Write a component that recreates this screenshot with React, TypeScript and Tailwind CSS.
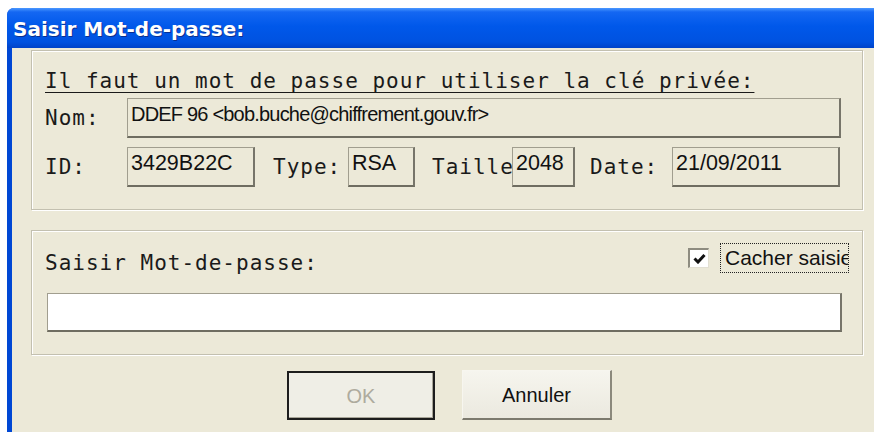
import React from "react";

const mono = "font-['DejaVu_Sans_Mono',monospace] text-[21px] leading-[24px] tracking-[1px] text-[#1a1a1a]";
const sans = "font-['Liberation_Sans',Arial,sans-serif] text-[#111]";

// Read-only field with the grey sunken edge
const Field = ({ w, text, cls = "text-[21.5px]" }: { w: string; text: string; cls?: string }) => (
	<div
		className={`${w} h-[40px] shrink-0 border-t border-l border-[#a19e8f] border-r-2 border-b-2 border-r-[#77756a] border-b-[#6f6d61] pl-[3px] pt-[4px] leading-[22px] whitespace-nowrap overflow-hidden ${sans} ${cls}`}
	>
		{text}
	</div>
);

const Label = ({ w, text }: { w: string; text: string }) => (
	<span className={`${w} shrink-0 whitespace-nowrap overflow-hidden ${mono}`}>{text}</span>
);

const App = () => {
	return (
		<div className="w-[874px] h-[432px] overflow-hidden bg-white pt-[8px] pl-[7px] flex">
			<div className="flex-1 flex flex-col rounded-tl-[7px] overflow-hidden bg-[#0047d4]">
				{/* title bar */}
				<div className="h-[40px] shrink-0 bg-[linear-gradient(180deg,#4a98ff_0%,#1467f2_10%,#0058ea_45%,#0052e0_85%,#0043c8_100%)] pl-[6px] pt-[9px]">
					<span className="font-['DejaVu_Sans',sans-serif] font-bold text-[20px] leading-[24px] text-white [text-shadow:1px_1px_0_#0a2f90]">
						Saisir Mot-de-passe:
					</span>
				</div>

				{/* dialog body */}
				<div className="flex-1 ml-[5px] bg-[#ece9d8] pl-[19px] pr-[11px] pt-[2px]">
					{/* key details */}
					<div className="h-[160px] border border-[#c3c0b0] shadow-[1px_1px_0_#fff,inset_1px_1px_0_#fff] pl-[13px] pt-[18px]">
						<p className={`${mono} underline underline-offset-[4px] decoration-[1px]`}>
							Il faut un mot de passe pour utiliser la clé privée:
						</p>
						<div className="flex items-center mt-[5px]">
							<Label w="w-[82px]" text="Nom:" />
							<Field w="w-[714px]" text="DDEF 96 <bob.buche@chiffrement.gouv.fr>" cls="text-[20px] tracking-[-0.8px]" />
						</div>
						<div className="flex items-center mt-[9px]">
							<Label w="w-[82px]" text="ID:" />
							<Field w="w-[128px]" text="3429B22C" />
							<Label w="w-[75px] ml-[18px]" text="Type:" />
							<Field w="w-[67px]" text="RSA" />
							<Label w="w-[80px] ml-[17px]" text="Taille" />
							<Field w="w-[63px]" text="2048" />
							<Label w="w-[82px] ml-[15px]" text="Date:" />
							<Field w="w-[168px]" text="21/09/2011" />
						</div>
					</div>

					{/* password entry */}
					<div className="mt-[20px] h-[125px] border border-[#c3c0b0] shadow-[1px_1px_0_#fff,inset_1px_1px_0_#fff] pl-[13px] pr-[13px] pt-[12px]">
						<div className="flex items-start justify-between h-[30px]">
							<span className={`${mono} mt-[8px]`}>Saisir Mot-de-passe:</span>
							<div className="flex items-start">
								<div className="mt-[5px] w-[21px] h-[20px] bg-white border-t-2 border-l-2 border-[#8e8c80] border-r border-b border-r-[#e2dfd2] border-b-[#e2dfd2] flex items-center justify-center">
									<svg width="13" height="11" viewBox="0 0 13 11">
										<path d="M1.5 5.5 L5 9 L11.5 2" fill="none" stroke="#111" strokeWidth="3" />
									</svg>
								</div>
								<div className="ml-[11px] w-[129px] h-[30px] border border-dotted border-[#222] pl-[4px] overflow-hidden whitespace-nowrap">
									<span className={`${sans} text-[21px] leading-[28px]`}>Cacher saisie</span>
								</div>
							</div>
						</div>
						<div className="mt-[20px] ml-[2px] w-[795px] h-[39px] bg-white border-t border-l border-[#a19e8f] border-r-2 border-b-2 border-r-[#77756a] border-b-[#6f6d61]" />
					</div>

					{/* buttons */}
					<div className="flex items-start mt-[16px] ml-[256px] gap-[27px]">
						<button className="w-[148px] h-[49px] border-2 border-[#1d1d1d] bg-[#efeee6] shadow-[inset_-1px_-1px_0_#a8a598]">
							<span className={`${sans} text-[20px] text-[#aeab9e]`}>OK</span>
						</button>
						<button className="w-[150px] h-[50px] -mt-[1px] border-t border-l border-[#f7f6ef] border-r-2 border-b-2 border-r-[#8b897c] border-b-[#7c7a6e] bg-[linear-gradient(180deg,#f6f5ee,#ebe9df)]">
							<span className={`${sans} text-[20px]`}>Annuler</span>
						</button>
					</div>
				</div>
			</div>
		</div>
	);
};

export default App;
